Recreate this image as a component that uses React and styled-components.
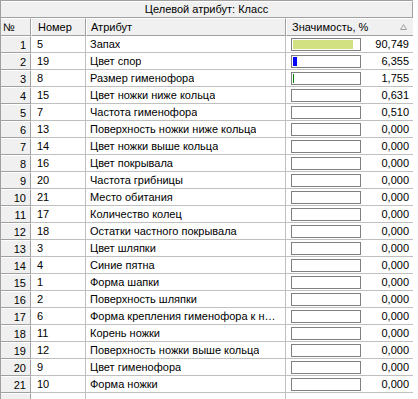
import React from 'react'
import styled, { createGlobalStyle } from 'styled-components'

const GlobalStyle = createGlobalStyle`
  html, body {
    margin: 0;
    padding: 0;
    background: #ffffff;
  }
  body {
    font: 11px 'Liberation Sans', Arial, sans-serif;
    color: #000000;
  }
`

const COLS = '30px 55px 200px 128px'

const Grid = styled.div`
  width: 413px;
  height: 399px;
  overflow: hidden;
  box-sizing: border-box;
  border-top: 1px solid #a0a0a0;
  border-left: 1px solid #a0a0a0;
  background: #ffffff;
`

const Caption = styled.div`
  height: 17px;
  box-sizing: border-box;
  background: #f0f0f0;
  border-bottom: 1px solid #a0a0a0;
  border-right: 1px solid #a0a0a0;
  border-top: 1px solid #ffffff;
  display: flex;
  align-items: center;
  justify-content: center;
  line-height: 15px;
`

const Row = styled.div`
  display: grid;
  grid-template-columns: ${COLS};
  height: ${props => props.h || 17}px;
`

const HeadCell = styled.div`
  box-sizing: border-box;
  background: #f0f0f0;
  border-top: 1px solid #ffffff;
  border-left: ${props => (props.first ? '0' : '1px solid #ffffff')};
  border-right: 1px solid #a0a0a0;
  border-bottom: 1px solid #a0a0a0;
  padding: 0 4px 0 ${props => props.pl || 5}px;
  display: flex;
  align-items: center;
  justify-content: space-between;
  white-space: nowrap;
`

const FixedCell = styled.div`
  box-sizing: border-box;
  background: #f0f0f0;
  border-top: 1px solid #ffffff;
  border-right: 1px solid #a0a0a0;
  border-bottom: 1px solid #a0a0a0;
  padding-right: 4px;
  display: flex;
  align-items: center;
  justify-content: flex-end;
`

const Cell = styled.div`
  box-sizing: border-box;
  border-right: 1px solid #c0c0c0;
  border-bottom: 1px solid #c0c0c0;
  padding: 0 4px 0 ${props => props.pl || 5}px;
  display: flex;
  align-items: center;
  justify-content: ${props => (props.right ? 'flex-end' : 'flex-start')};
  white-space: nowrap;
  overflow: hidden;
  min-width: 0;
`

const Clip = styled.span`
  overflow: hidden;
  text-overflow: ellipsis;
  white-space: nowrap;
  display: block;
  max-width: 190px;
`

const ValueCell = styled(Cell)`
  padding: 0 4px 0 5px;
  justify-content: space-between;
`

const Bar = styled.div`
  width: 70px;
  height: 13px;
  box-sizing: border-box;
  border: 1px solid #808080;
  padding: 1px;
  display: flex;
  flex-shrink: 0;
`

const Fill = styled.div`
  height: 100%;
  background: ${props => props.color};
`

const SortMark = styled.svg`
  width: 7px;
  height: 6px;
  margin-right: 2px;
`

const rows = [
  [5, 'Запах', 90.749, '#d2e283'],
  [19, 'Цвет спор', 6.355, '#0000ff'],
  [8, 'Размер гименофора', 1.755, '#008000'],
  [15, 'Цвет ножки ниже кольца', 0.631, '#008000'],
  [7, 'Частота гименофора', 0.51, '#008000'],
  [13, 'Поверхность ножки ниже кольца', 0],
  [14, 'Цвет ножки выше кольца', 0],
  [16, 'Цвет покрывала', 0],
  [20, 'Частота грибницы', 0],
  [21, 'Место обитания', 0],
  [17, 'Количество колец', 0],
  [18, 'Остатки частного покрывала', 0],
  [3, 'Цвет шляпки', 0],
  [4, 'Синие пятна', 0],
  [1, 'Форма шапки', 0],
  [2, 'Поверхность шляпки', 0],
  [6, 'Форма крепления гименофора к ножке', 0],
  [11, 'Корень ножки', 0],
  [12, 'Поверхность ножки выше кольца', 0],
  [9, 'Цвет гименофора', 0],
  [10, 'Форма ножки', 0]
]

const format = v => v.toFixed(3).replace('.', ',')

export default function App () {
  return (
    <>
      <GlobalStyle />
      <Grid>
        <Caption>Целевой атрибут: Класс</Caption>
        <Row h={18}>
          <HeadCell first pl={2}>№</HeadCell>
          <HeadCell pl={6}>Номер</HeadCell>
          <HeadCell pl={4}>Атрибут</HeadCell>
          <HeadCell pl={5}>
            Значимость, %
            <SortMark viewBox='0 0 7 6'>
              <path d='M3.5 0.5 L6.5 5.5 L0.5 5.5 Z' fill='none' stroke='#a0a0a0' strokeWidth='1' />
            </SortMark>
          </HeadCell>
        </Row>
        {rows.map(([num, name, value, color], i) => (
          <Row key={i}>
            <FixedCell>{i + 1}</FixedCell>
            <Cell pl={6}>{num}</Cell>
            <Cell pl={4}><Clip>{name}</Clip></Cell>
            <ValueCell>
              <Bar>
                <Fill color={color || '#ffffff'} style={{ width: `${Math.round((value / 100) * 66)}px` }} />
              </Bar>
              {format(value)}
            </ValueCell>
          </Row>
        ))}
        <Row>
          <FixedCell />
          <Cell />
          <Cell />
          <Cell />
        </Row>
      </Grid>
    </>
  )
}
